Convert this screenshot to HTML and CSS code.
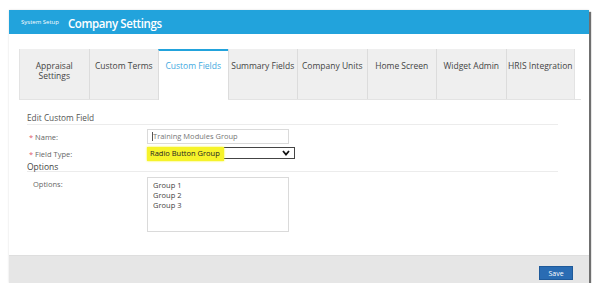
FILE: index.html
```html
<!DOCTYPE html>
<html lang="en">
<head>
    <meta charset="UTF-8">
    <title>Company Settings</title>
    <link rel="stylesheet" href="styles.css">
</head>
<body>
    <div class="frame">
        <div class="page-header">
            <span class="crumb">System Setup</span>
            <span class="page-title">Company Settings</span>
        </div>

        <div class="panel">
            <div class="tabs">
                <div class="tab">Appraisal Settings</div>
                <div class="tab">Custom Terms</div>
                <div class="tab active">Custom Fields</div>
                <div class="tab">Summary Fields</div>
                <div class="tab">Company Units</div>
                <div class="tab">Home Screen</div>
                <div class="tab">Widget Admin</div>
                <div class="tab">HRIS Integration</div>
            </div>

            <div class="form">
                <div class="section-title">Edit Custom Field</div>
                <div class="row">
                    <label class="label"><span class="req">*</span> Name:</label>
                    <div class="text-input"><span class="caret"></span>Training Modules Group</div>
                </div>
                <div class="row">
                    <label class="label"><span class="req">*</span> Field Type:</label>
                    <div class="select">
                        <span class="highlight">Radio Button Group</span>
                        <svg class="chevron" width="8" height="6" viewBox="0 0 8 6">
                            <path d="M1 1 L4 4.5 L7 1" fill="none" stroke="#111" stroke-width="1.8"/>
                        </svg>
                    </div>
                </div>
                <div class="section-title options-title">Options</div>
                <div class="row row-top">
                    <label class="label plain">Options:</label>
                    <div class="textarea">
                        <div>Group 1</div>
                        <div>Group 2</div>
                        <div>Group 3</div>
                    </div>
                </div>
            </div>
        </div>

        <div class="page-footer">
            <button class="save-button">Save</button>
        </div>
    </div>
</body>
</html>
```

FILE: styles.css
```css
body {
    margin: 0;
    background-color: #fff;
    font-family: "Open Sans", Arial, sans-serif;
    color: #555;
}
.frame {
    margin: 10px 0 0 9px;
    width: 580px;
    box-shadow: 2px 2px 1px #6f6f6f, 0 0 2px #ddd;
}
.page-header {
    height: 24px;
    background-color: #22a3dc;
    display: flex;
    align-items: center;
    padding-left: 12px;
    color: #fff;
}
.crumb {
    font-size: 6px;
    margin-right: 9px;
}
.page-title {
    font-size: 11.5px;
    font-weight: 600;
    letter-spacing: -0.4px;
    transform: scaleY(1.15);
}
.panel {
    height: 206px;
    background-color: #fff;
    padding: 15px 8px 0 10px;
}
.tabs {
    display: flex;
    border-bottom: 1px solid #e3e3e3;
}
.tab {
    width: 69.5px;
    height: 50px;
    box-sizing: border-box;
    background-color: #efefef;
    border-left: 1px solid #dcdcdc;
    display: flex;
    align-items: flex-start;
    justify-content: center;
    text-align: center;
    font-size: 8.5px;
    line-height: 10px;
    color: #444;
    padding-top: 12px;
}
.tab:first-child {
    border-left: 1px solid #e3e3e3;
}
.tab:nth-child(8) {
    border-right: 1px solid #e3e3e3;
}
.tab.active {
    background-color: #fff;
    color: #3fa9e0;
    border-top: 2px solid #22a3dc;
    margin-bottom: -1px;
    height: 51px;
    padding-top: 10px;
}
.form {
    padding: 13px 0 0 8px;
    width: 531px;
}
.section-title {
    font-size: 8.3px;
    color: #555;
    border-bottom: 1px solid #ececec;
    padding-bottom: 1px;
    line-height: 10px;
}
.options-title {
    font-size: 8.5px;
    color: #444;
    margin-top: 4px;
    line-height: 8px;
    padding-bottom: 0;
}
.row {
    display: flex;
    align-items: center;
    margin-top: 4px;
}
.row-top {
    align-items: flex-start;
    margin-top: 5px;
}
.label {
    width: 118px;
    padding-left: 2px;
    font-size: 7.5px;
    color: #666;
}
.label.plain {
    padding-left: 6px;
    width: 114px;
    margin-top: 2px;
}
.req {
    color: #e05a6a;
}
.text-input {
    width: 142px;
    height: 15px;
    box-sizing: border-box;
    border: 1px solid #dadada;
    font-size: 7.5px;
    color: #777;
    padding-left: 4px;
    line-height: 13px;
    display: flex;
    align-items: center;
}
.caret {
    width: 1px;
    height: 9px;
    background-color: #555;
}
.select {
    width: 148px;
    height: 12px;
    box-sizing: border-box;
    border: 1px solid #444;
    display: flex;
    align-items: center;
    justify-content: space-between;
    font-size: 7.5px;
    color: #222;
    margin-top: -1px;
}
.highlight {
    background-color: #f6f32a;
    padding: 1px 4px 3px 3px;
    margin-left: -1px;
    margin-top: 2px;
    box-shadow: 0 0 2px #f6f32a;
}
.chevron {
    margin-right: 4px;
}
.textarea {
    width: 142px;
    height: 55px;
    box-sizing: border-box;
    border: 1px solid #dadada;
    font-size: 7.5px;
    color: #444;
    padding: 2px 5px;
    line-height: 10px;
}
.page-footer {
    height: 28px;
    background-color: #e6e6e6;
    border-top: 1px solid #dedede;
    box-sizing: border-box;
    display: flex;
    justify-content: flex-end;
    align-items: flex-end;
    padding: 0 16px 3px 0;
}
.save-button {
    width: 34px;
    height: 14px;
    background-color: #2a6cb3;
    color: #fff;
    border: 1px solid #1f5a9a;
    font-family: "Open Sans", Arial, sans-serif;
    font-size: 7px;
    padding: 0;
}
```
